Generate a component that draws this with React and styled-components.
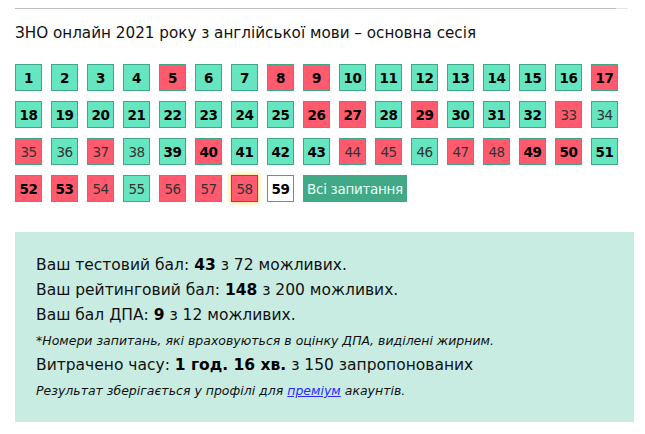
import React from "react";
import styled, { createGlobalStyle, css } from "styled-components";

const Global = createGlobalStyle`
  html, body { margin: 0; padding: 0; background: #fff; }
  body { font-family: "DejaVu Sans", "Liberation Sans", sans-serif; color: #111; }
`;

const Page = styled.div`
  padding: 8px 0 0 15px;
  width: 619px;
`;

const Rule = styled.div`
  height: 1px;
  width: 613px;
  background: linear-gradient(to right, #bdbdbd 0, #bdbdbd 601px, #e6e6e6 601px);
`;

const Title = styled.h1`
  margin: 14px 0 0;
  font-size: 15.2px;
  font-weight: normal;
  line-height: 20px;
  color: #111;
`;

const Grid = styled.div`
  display: flex;
  flex-wrap: wrap;
  column-gap: 9px;
  row-gap: 10px;
  width: 612px;
  margin-top: 21px;
`;

const palette = {
  g: { bg: "#66e5c1", border: "#3ea886" },
  r: { bg: "#ff5a6d", border: "#3ea886" },
  w: { bg: "#ffffff", border: "#3ea886" },
};

const Cell = styled.div`
  box-sizing: border-box;
  width: 27px;
  height: 27px;
  display: flex;
  align-items: center;
  justify-content: center;
  font-size: 13.5px;
  letter-spacing: -0.5px;
  background: ${(p) => palette[p.$c].bg};
  border: 1px solid ${(p) => palette[p.$c].border};
  font-weight: ${(p) => (p.$b ? "bold" : "normal")};
  color: ${(p) => (p.$b ? "#000" : "#333")};
  ${(p) =>
    p.$current &&
    css`
      border-color: #d42a3c;
      box-shadow: 0 0 4px 1px rgba(255, 215, 80, 0.75);
    `}
`;

const AllButton = styled.div`
  box-sizing: border-box;
  height: 27px;
  width: 104px;
  display: flex;
  align-items: center;
  justify-content: center;
  background: #42a987;
  color: #e9fff6;
  font-size: 13.5px;
  letter-spacing: -0.3px;
`;

const Panel = styled.div`
  box-sizing: border-box;
  margin-top: 30px;
  width: 619px;
  height: 190px;
  background: #c8ece2;
  padding: 21px 0 0 21px;
`;

const Line = styled.div`
  font-size: ${(p) => (p.$small ? "12.5px" : "15.5px")};
  font-style: ${(p) => (p.$small ? "italic" : "normal")};
  line-height: 25px;
  color: #111;
  b { color: #000; }
`;

const Link = styled.a`
  color: #2a2aff;
  text-decoration: underline;
`;

// [number, color, bold]
const data = [
  [1,"g",1],[2,"g",1],[3,"g",1],[4,"g",1],[5,"r",1],[6,"g",1],[7,"g",1],[8,"r",1],[9,"r",1],
  [10,"g",1],[11,"g",1],[12,"g",1],[13,"g",1],[14,"g",1],[15,"g",1],[16,"g",1],[17,"r",1],
  [18,"g",1],[19,"g",1],[20,"g",1],[21,"g",1],[22,"g",1],[23,"g",1],[24,"g",1],[25,"g",1],[26,"r",1],
  [27,"r",1],[28,"g",1],[29,"r",1],[30,"g",1],[31,"g",1],[32,"g",1],[33,"r",0],[34,"g",0],
  [35,"r",0],[36,"g",0],[37,"r",0],[38,"g",0],[39,"g",1],[40,"r",1],[41,"g",1],[42,"g",1],[43,"g",1],
  [44,"r",0],[45,"r",0],[46,"g",0],[47,"r",0],[48,"r",0],[49,"r",1],[50,"r",1],[51,"g",1],
  [52,"r",1],[53,"r",1],[54,"r",0],[55,"g",0],[56,"r",0],[57,"r",0],[58,"r",0],[59,"w",1],
];

export default function App() {
  return (
    <>
      <Global />
      <Page>
        <Rule />
        <Title>ЗНО онлайн 2021 року з англійської мови – основна сесія</Title>
        <Grid>
          {data.map(([n, c, b]) => (
            <Cell key={n} $c={c} $b={!!b} $current={n === 58}>
              {n}
            </Cell>
          ))}
          <AllButton>Всі запитання</AllButton>
        </Grid>
        <Panel>
          <Line>Ваш тестовий бал: <b>43</b> з 72 можливих.</Line>
          <Line>Ваш рейтинговий бал: <b>148</b> з 200 можливих.</Line>
          <Line>Ваш бал ДПА: <b>9</b> з 12 можливих.</Line>
          <Line $small>*Номери запитань, які враховуються в оцінку ДПА, виділені жирним.</Line>
          <Line>Витрачено часу: <b>1 год. 16 хв.</b> з 150 запропонованих</Line>
          <Line $small>Результат зберігається у профілі для <Link href="#">преміум</Link> акаунтів.</Line>
        </Panel>
      </Page>
    </>
  );
}
